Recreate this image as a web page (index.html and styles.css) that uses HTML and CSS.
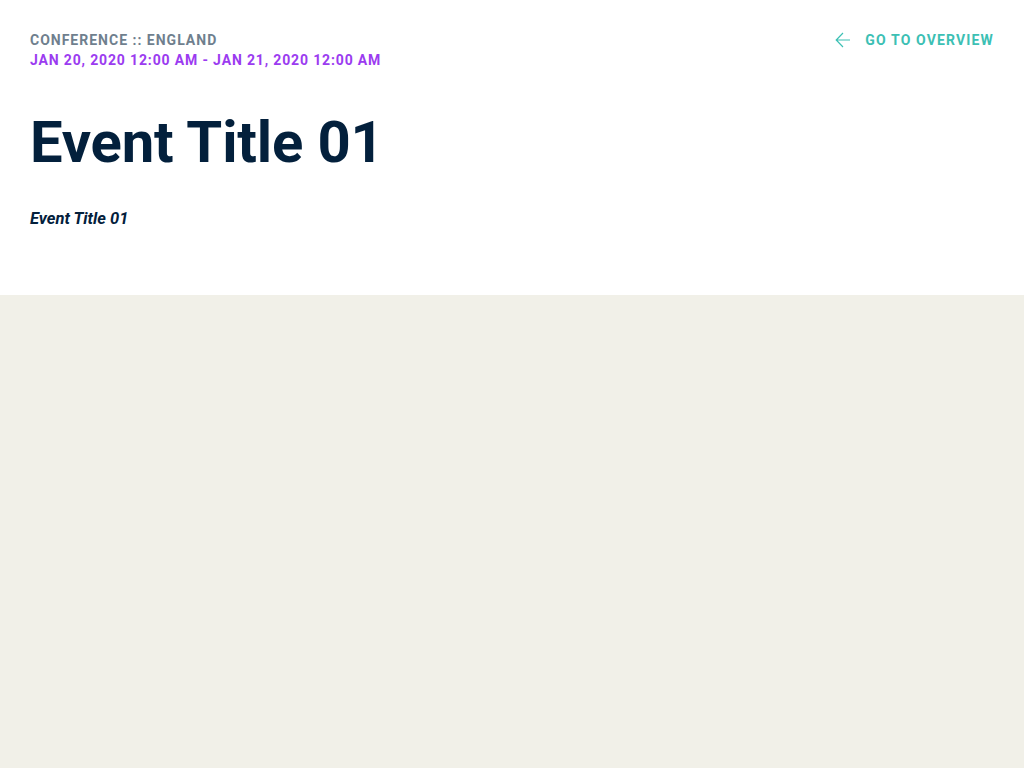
FILE: index.html
```html
<!DOCTYPE html>
<html lang="en">
<head>
<meta charset="utf-8">
<title>Event Title 01</title>
<link rel="stylesheet" href="styles.css">
</head>
<body>
<header class="event-header">
  <div class="top-row">
    <div class="meta">
      <div class="category">CONFERENCE :: ENGLAND</div>
      <div class="dates">JAN 20, 2020 12:00 AM - JAN 21, 2020 12:00 AM</div>
    </div>
    <a class="back-link" href="#">
      <svg class="arrow" width="16" height="16" viewBox="0 0 16 16" aria-hidden="true">
        <path d="M15 8H1.2M8 1L1.2 8 8 15" fill="none" stroke="currentColor" stroke-width="1.2"/>
      </svg>
      <span>GO TO OVERVIEW</span>
    </a>
  </div>
  <h1 class="title">Event Title 01</h1>
  <p class="subtitle">Event Title 01</p>
</header>
<main class="content"></main>
</body>
</html>
```
FILE: styles.css
```css
html, body {
  margin: 0;
  padding: 0;
  height: 100%;
}
body {
  font-family: Roboto, "Liberation Sans", sans-serif;
  background: #f1f0e8;
  display: flex;
  flex-direction: column;
}
.event-header {
  background: #ffffff;
  height: 295px;
  box-sizing: border-box;
  padding: 30px 30px 0 30px;
}
.top-row {
  display: flex;
  justify-content: space-between;
  align-items: flex-start;
}
.meta {
  font-size: 14px;
  font-weight: 700;
  letter-spacing: 1px;
  line-height: 20px;
}
.category {
  color: #6f7f8e;
}
.dates {
  color: #9b3bf0;
  letter-spacing: 0.85px;
}
.back-link {
  display: flex;
  align-items: center;
  gap: 14px;
  color: #3cc0b4;
  text-decoration: none;
  font-size: 14px;
  font-weight: 700;
  letter-spacing: 1.15px;
  line-height: 20px;
}
.arrow {
  display: block;
}
.title {
  margin: 38px 0 0 0;
  font-size: 58px;
  line-height: 68px;
  font-weight: 700;
  color: #03203c;
  letter-spacing: -0.15px;
}
.subtitle {
  margin: 33px 0 0 0;
  font-size: 16.5px;
  line-height: 20px;
  font-weight: 700;
  font-style: italic;
  color: #03203c;
}
.content {
  flex: 1;
}
```
